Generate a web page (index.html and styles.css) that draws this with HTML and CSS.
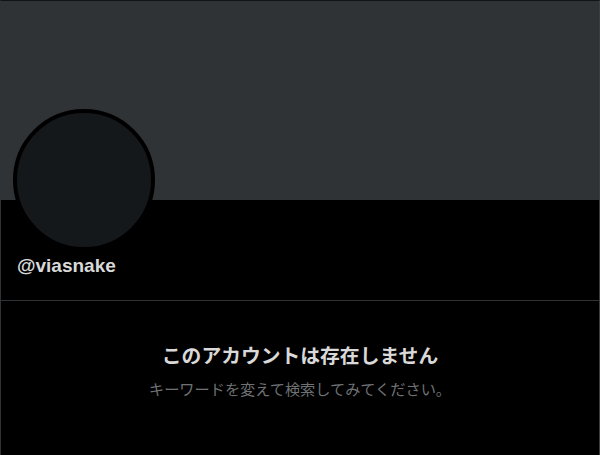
FILE: index.html
```html
<!DOCTYPE html>
<html lang="ja">
<head>
  <meta charset="UTF-8">
  <title>@viasnake</title>
  <meta name="viewport" content="width=device-width, initial-scale=1">
  <link rel="stylesheet" href="styles.css">
</head>
<body>

  <div class="profile">
    <div class="banner"></div>

    <div class="head">
      <div class="avatar"></div>
      <div class="handle">@viasnake</div>
    </div>

    <div class="empty">
      <h2 class="empty-title">このアカウントは存在しません</h2>
      <p class="empty-sub">キーワードを変えて検索してみてください。</p>
    </div>
  </div>

</body>
</html>
```

FILE: styles.css
```css
html, body {
  margin:0;
  height:100%;
  background:#000;
}

body {
  font-family:"Noto Sans CJK JP", "Noto Sans", sans-serif;
  color:#d9d9d9;
}

.profile {
  height:100%;
  border-top:1px solid #0f1419;
  border-right:1px solid #3a3e41;
  border-left:1px solid #2f3336;
  box-sizing:border-box;
}

.banner {
  height:199px;
  background:#2f3336;
}

.head {
  height:100px;
  padding:0 16px;
  border-bottom:1px solid #2f3336;
  position:relative;
}

.avatar {
  position:absolute;
  left:12px;
  top:-91px;
  width:134px;
  height:134px;
  border-radius:50%;
  border:4px solid #000;
  background:#15181b;
}

.handle {
  padding-top:55px;
  font-family:"Liberation Sans", "Noto Sans", sans-serif;
  font-weight:bold;
  font-size:19px;
  color:#d9d9d9;
}

.empty {
  text-align:center;
  padding-top:40px;
}

.empty-title {
  margin:0;
  font-size:19.8px;
  font-weight:bold;
  line-height:28px;
  color:#d9d9d9;
}

.empty-sub {
  margin:9px 0 0;
  font-size:15.2px;
  line-height:20px;
  color:#6f7275;
}
```
